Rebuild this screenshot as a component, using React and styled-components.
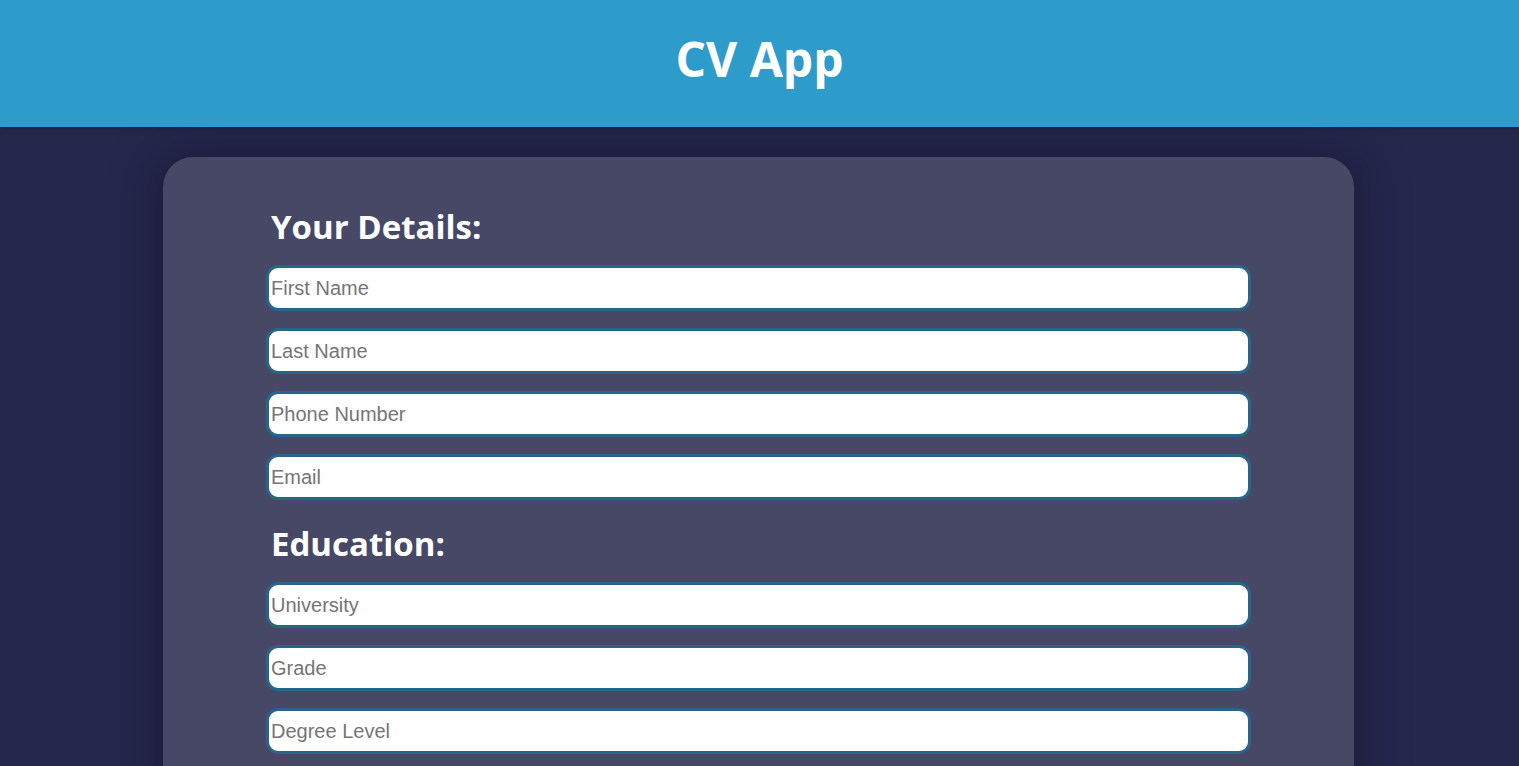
import React from "react";
import styled, { createGlobalStyle } from "styled-components";

const Global = createGlobalStyle`
  * { box-sizing: border-box; }
  html, body { margin: 0; padding: 0; }
  body {
    background: #25274d;
    font-family: "Open Sans", "Noto Sans", sans-serif;
    overflow: hidden;
  }
`;

const Header = styled.header`
  height: 127px;
  background: #2e9cca;
  display: flex;
  justify-content: center;
  align-items: flex-start;
  box-shadow: 0 2px 6px rgba(0, 0, 0, 0.15);
  position: relative;
  z-index: 1;
`;

const Title = styled.h1`
  margin: 0;
  padding-top: 26px;
  color: #ffffff;
  font-size: 48px;
  font-weight: 700;
  line-height: 66px;
`;

const Main = styled.main`
  display: flex;
  justify-content: center;
  padding: 30px 2px 0 0;
`;

const Card = styled.section`
  width: 1191px;
  background: #464866;
  border-radius: 30px;
  padding: 40px 103px 40px 103px;
  box-shadow: 0 0 40px 10px rgba(20, 20, 45, 0.5);
  display: flex;
  flex-direction: column;
`;

const SectionTitle = styled.h2`
  margin: ${(p) => p.$top}px 0 15px 5px;
  color: #ffffff;
  font-size: 33px;
  font-weight: 700;
  line-height: 46px;
`;

const Fields = styled.div`
  display: flex;
  flex-direction: column;
  gap: 17px;
`;

const Input = styled.input`
  width: 985px;
  height: 46px;
  border: 3px solid #29648a;
  border-radius: 12px;
  background: #ffffff;
  padding: 0 2px;
  font-family: "Liberation Sans", Arial, sans-serif;
  font-size: 20px;
  color: #333;
  outline: none;
  &::placeholder { color: #757575; }
`;

const details = ["First Name", "Last Name", "Phone Number", "Email"];
const education = ["University", "Grade", "Degree Level", "Start Date", "End Date"];

export default function App() {
  return (
    <>
      <Global />
      <Header>
        <Title>CV App</Title>
      </Header>
      <Main>
        <Card>
          <SectionTitle $top={7}>Your Details:</SectionTitle>
          <Fields>
            {details.map((d) => (
              <Input key={d} placeholder={d} />
            ))}
          </Fields>
          <SectionTitle $top={21}>Education:</SectionTitle>
          <Fields>
            {education.map((d) => (
              <Input key={d} placeholder={d} />
            ))}
          </Fields>
        </Card>
      </Main>
    </>
  );
}
